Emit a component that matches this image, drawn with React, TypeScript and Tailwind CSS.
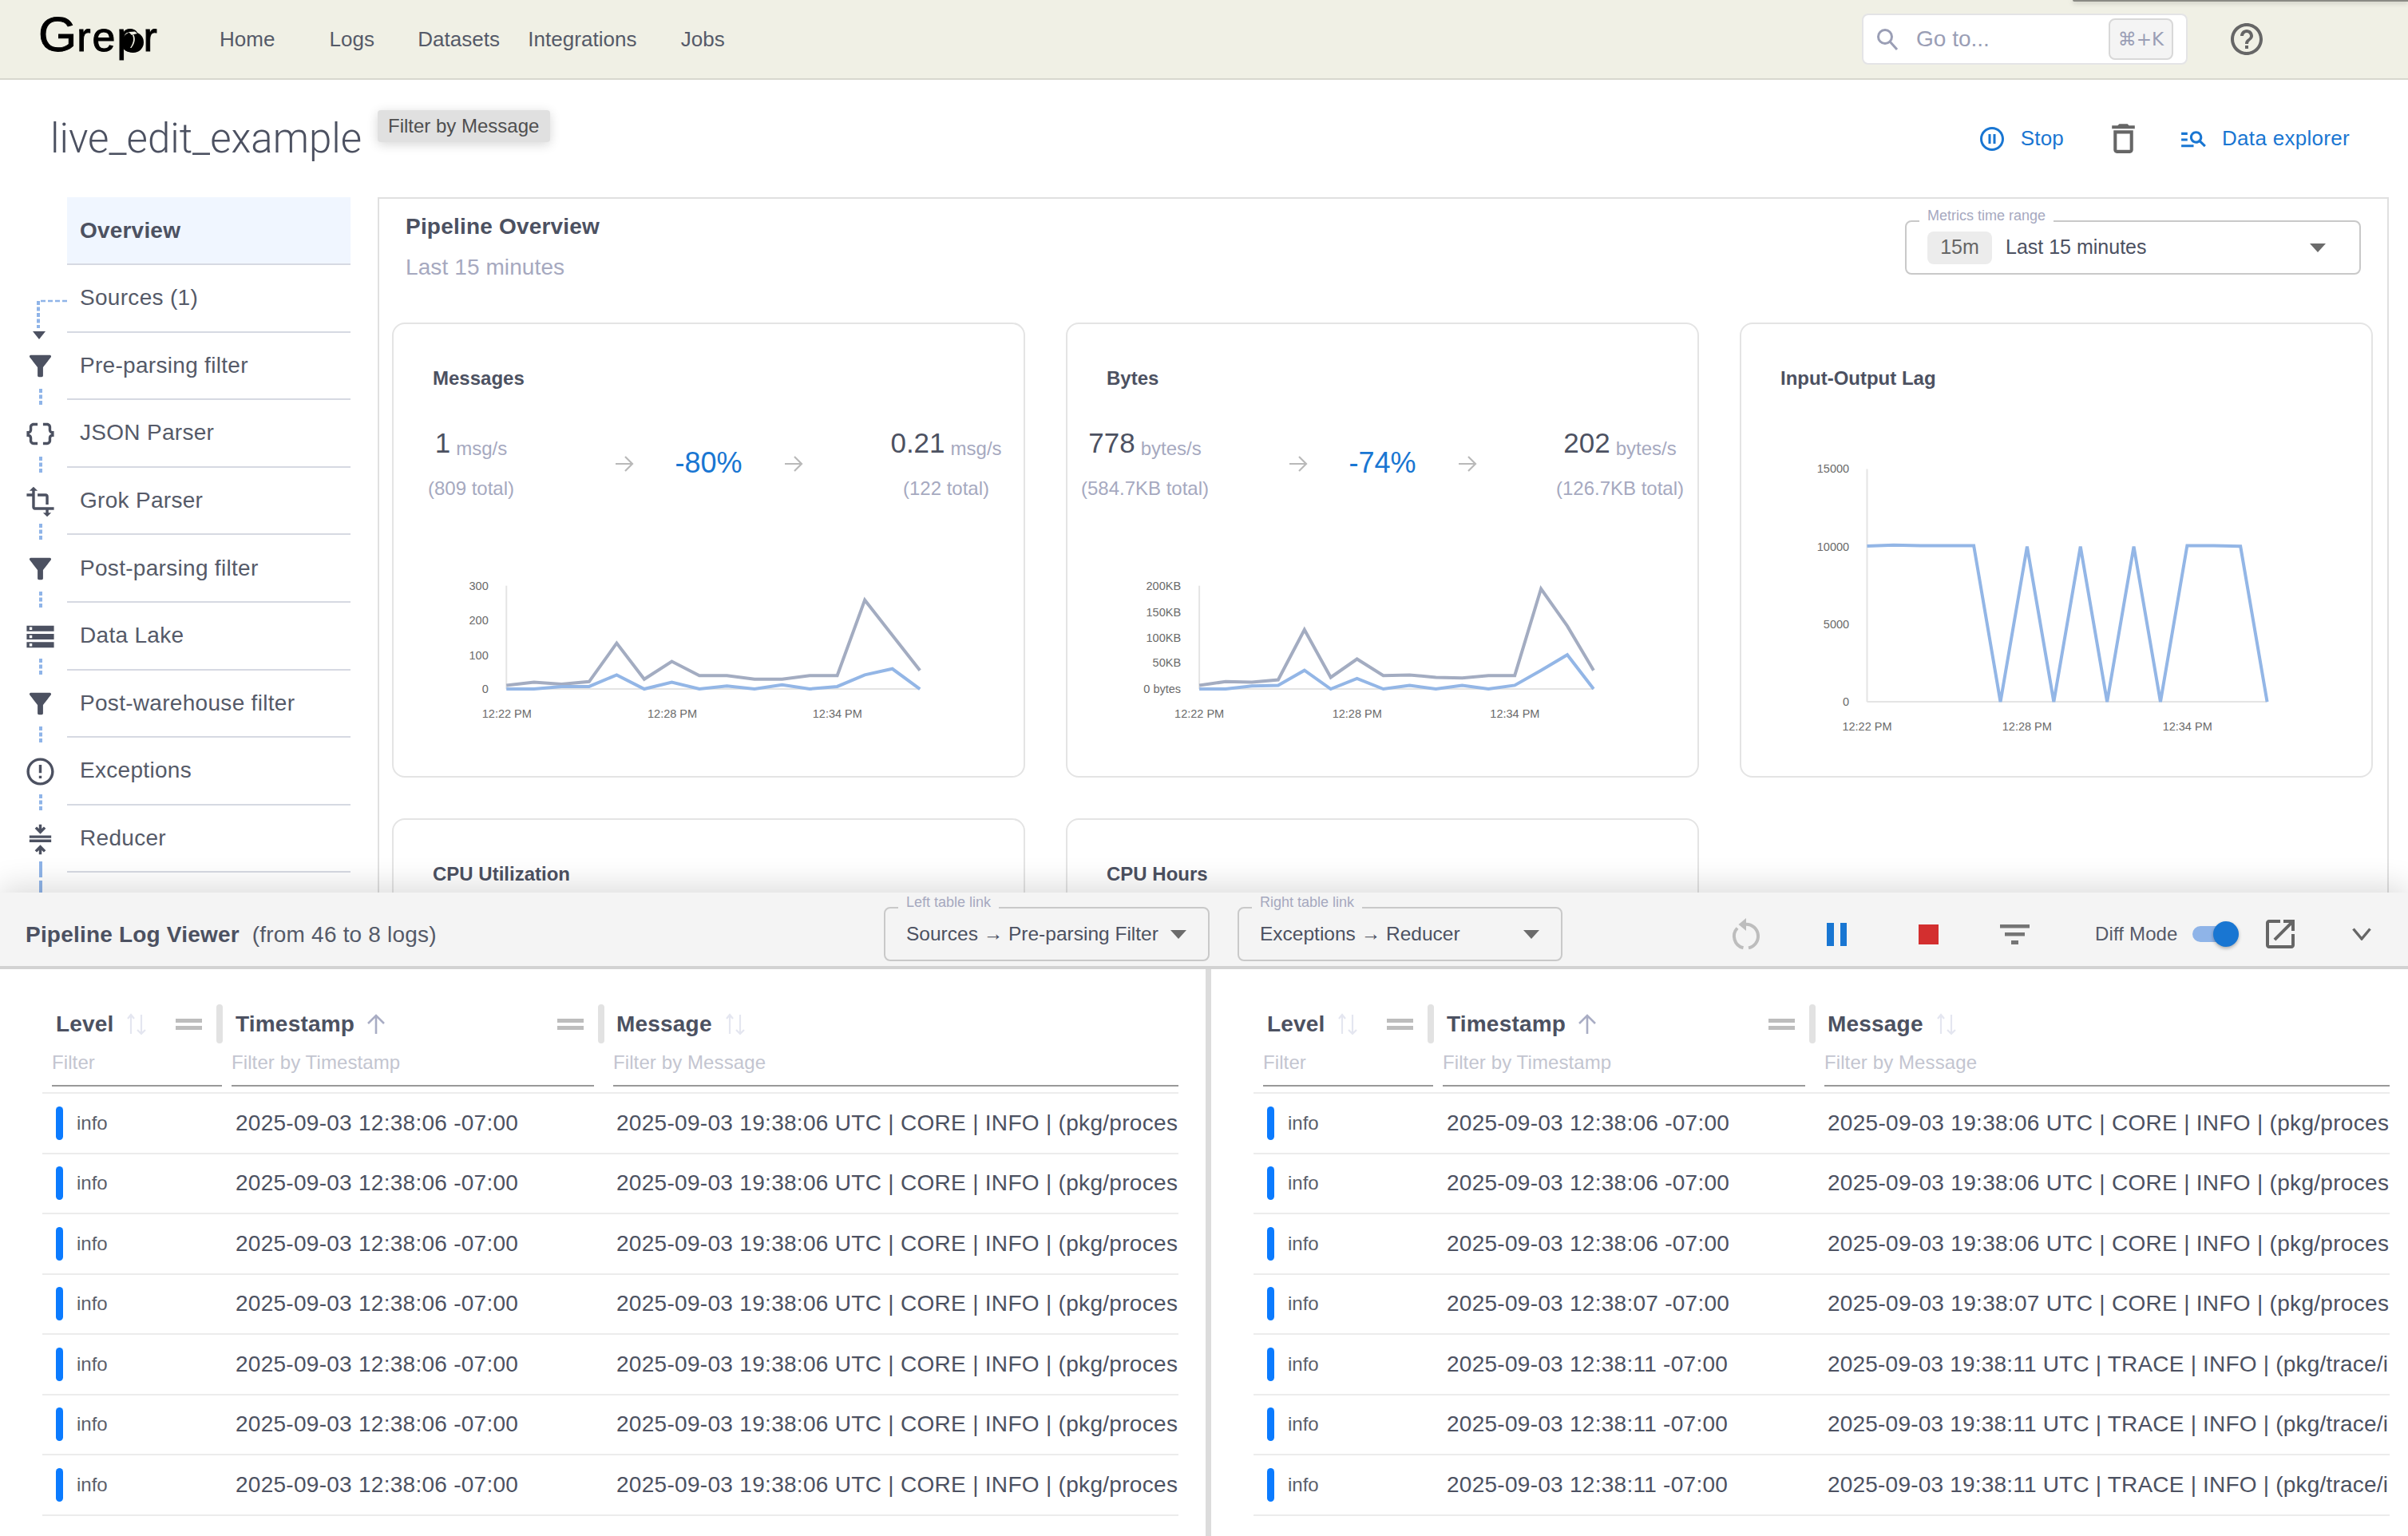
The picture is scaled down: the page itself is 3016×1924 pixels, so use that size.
import React from "react";

const INK = "text-[#4c5161]";

function MuiIcon({ d, size, className }: { d: string; size: number; className?: string }) {
  return (
    <svg width={size} height={size} viewBox="0 0 24 24" fill="currentColor" className={className}>
      <path d={d} />
    </svg>
  );
}

const ICONS = {
  filter: "M4.25 5.61C6.27 8.2 10 13 10 13v6c0 .55.45 1 1 1h2c.55 0 1-.45 1-1v-6s3.72-4.8 5.74-7.39c.51-.66.04-1.61-.79-1.61H5.04c-.83 0-1.3.95-.79 1.61z",
  json: "M4 7v2c0 .55-.45 1-1 1H2v4h1c.55 0 1 .45 1 1v2c0 1.65 1.35 3 3 3h3v-2H7c-.55 0-1-.45-1-1v-2c0-1.3-.84-2.42-2-2.83v-.34C5.16 11.42 6 10.3 6 9V7c0-.55.45-1 1-1h3V4H7C5.35 4 4 5.35 4 7zm17 3c-.55 0-1-.45-1-1V7c0-1.65-1.35-3-3-3h-3v2h3c.55 0 1 .45 1 1v2c0 1.3.84 2.42 2 2.83v.34c-1.16.41-2 1.52-2 2.83v2c0 .55-.45 1-1 1h-3v2h3c1.65 0 3-1.35 3-3v-2c0-.55.45-1 1-1h1v-4h-1z",
  transform: "M22 18v-2H8V4h2L7 1 4 4h2v2H2v2h4v8c0 1.1.9 2 2 2h8v2h-2l3 3 3-3h-2v-2h4zM10 8h6v6h2V8c0-1.1-.9-2-2-2h-6v2z",
  storage: "M2 20h20v-4H2v4zm2-3h2v2H4v-2zM2 4v4h20V4H2zm4 3H4V5h2v2zm-4 7h20v-4H2v4zm2-3h2v2H4v-2z",
  error: "M11 15h2v2h-2zm0-8h2v6h-2zm.99-5C6.47 2 2 6.48 2 12s4.47 10 9.99 10C17.52 22 22 17.52 22 12S17.52 2 11.99 2zM12 20c-4.42 0-8-3.58-8-8s3.58-8 8-8 8 3.58 8 8-3.58 8-8 8z",
  compress: "M4 9v2h16V9H4z M16 4l-1.41-1.41L13 4.17V1h-2v3.17L9.41 2.59 8 4l4 4 4-4z M8 20l1.41 1.41L11 19.83V23h2v-3.17l1.59 1.58L16 20l-4-4-4 4z M4 14h16v-2H4v2z",
  help: "M11 18h2v-2h-2v2zm1-16C6.48 2 2 6.48 2 12s4.48 10 10 10 10-4.48 10-10S17.52 2 12 2zm0 18c-4.41 0-8-3.59-8-8s3.59-8 8-8 8 3.59 8 8-3.59 8-8 8zm0-14c-2.21 0-4 1.79-4 4h2c0-1.1.9-2 2-2s2 .9 2 2c0 2-3 1.75-3 5h2c0-2.25 3-2.5 3-5 0-2.21-1.79-4-4-4z",
  pause: "M9 16h2V8H9v8zm3-14C6.48 2 2 6.48 2 12s4.48 10 10 10 10-4.48 10-10S17.52 2 12 2zm0 18c-4.41 0-8-3.59-8-8s3.59-8 8-8 8 3.59 8 8-3.59 8-8 8zm1-4h2V8h-2v8z",
  trash: "M6 19c0 1.1.9 2 2 2h8c1.1 0 2-.9 2-2V7H6v12zM8 9h8v10H8V9zm7.5-5l-1-1h-5l-1 1H5v2h14V4h-3.5z",
  explore: "M7 9H2V7h5v2zm0 3H2v2h5v-2zm13.59 7l-3.83-3.83c-.8.52-1.74.83-2.76.83-2.76 0-5-2.24-5-5s2.24-5 5-5 5 2.24 5 5c0 1.02-.31 1.96-.83 2.75L22 17.59 20.59 19zM17 11c0-1.65-1.35-3-3-3s-3 1.35-3 3 1.35 3 3 3 3-1.35 3-3zM2 19h10v-2H2v2z",
  open: "M19 19H5V5h7V3H5c-1.11 0-2 .9-2 2v14c0 1.1.89 2 2 2h14c1.1 0 2-.9 2-2v-7h-2v7zM14 3v2h3.59l-9.83 9.83 1.41 1.41L19 6.41V10h2V3h-7z",
};

function Caret({ className }: { className?: string }) {
  return (
    <svg width="20" height="11" viewBox="0 0 20 11" className={className}>
      <polygon points="0,0 20,0 10,11" fill="#6b6b6b" />
    </svg>
  );
}

function Outlined({
  legend,
  legendBg,
  className,
  children,
}: {
  legend: string;
  legendBg: string;
  className: string;
  children: React.ReactNode;
}) {
  return (
    <div className={`relative flex items-center rounded-[8px] border-2 border-[#c9c9c9] ${className}`}>
      <span className={`absolute left-[16px] top-[-19px] whitespace-nowrap px-[10px] text-[18px] leading-[22px] text-[#a6a9bf] ${legendBg}`}>
        {legend}
      </span>
      {children}
    </div>
  );
}

const SIDEBAR: { label: string; icon?: keyof typeof ICONS }[] = [
  { label: "Pre-parsing filter", icon: "filter" },
  { label: "JSON Parser", icon: "json" },
  { label: "Grok Parser", icon: "transform" },
  { label: "Post-parsing filter", icon: "filter" },
  { label: "Data Lake", icon: "storage" },
  { label: "Post-warehouse filter", icon: "filter" },
  { label: "Exceptions", icon: "error" },
  { label: "Reducer", icon: "compress" },
];

function Sidebar() {
  return (
    <div className="w-[473px] shrink-0">
      <div className="ml-[84px] mr-[34px] flex h-[85px] items-center border-b-2 border-[#d6d9e2] bg-[#f0f6ff] pl-[16px]">
        <span className={`text-[28px] font-bold tracking-[0.2px] ${INK}`}>Overview</span>
      </div>
      <div className="relative ml-[84px] mr-[34px] flex h-[84.6px] items-center border-b-2 border-[#d6d9e2] pl-[16px]">
        <svg width="46" height="52" viewBox="0 0 46 52" className="absolute left-[-43px] top-[43px] overflow-visible">
          <path d="M43 2H7" stroke="#8fb4e8" strokeWidth="2.5" strokeDasharray="6 3" fill="none" />
          <path d="M7 2V36" stroke="#8fb4e8" strokeWidth="4" strokeDasharray="5 2.5" fill="none" />
          <polygon points="0,40 16,40 8,50" fill="#4c5161" />
        </svg>
        <span className="text-[28px] tracking-[0.3px] text-[#555a68]">Sources (1)</span>
      </div>
      {SIDEBAR.map((r, i) => (
        <div key={i} className="flex h-[84.6px]">
          <div className="relative flex w-[84px] shrink-0 items-center pl-[30px] text-[#4c5161]">
            <MuiIcon d={ICONS[r.icon!]} size={41} />
            <svg
              width="4"
              height={r.icon === "compress" ? 40 : 20}
              className="absolute left-[49px] top-[70.5px] overflow-visible"
            >
              <line
                x1="2"
                y1="0"
                x2="2"
                y2={r.icon === "compress" ? 40 : 20}
                stroke="#8fb4e8"
                strokeWidth="4"
                strokeDasharray={r.icon === "compress" ? "20 4" : "5 2.5"}
              />
            </svg>
          </div>
          <div className="mr-[34px] flex flex-1 items-center border-b-2 border-[#d6d9e2] pl-[16px]">
            <span className="text-[28px] tracking-[0.3px] text-[#555a68]">{r.label}</span>
          </div>
        </div>
      ))}
    </div>
  );
}

type Chart = {
  h: number;
  gx: number;
  gy: number;
  sx: number;
  sy: number;
  axisX: number;
  axisTop: number;
  axisBottom: number;
  right: number;
  labelY: number;
  labelRight: number;
  xLabels: [string, number][];
  yLabels: [string, number][];
  xs: number[];
  series: { color: string; ys: number[] }[];
};

function ChartView({ c }: { c: Chart }) {
  const X = (v: number) => v / c.sx - c.gx;
  const Y = (v: number) => v / c.sy - c.gy;
  return (
    <svg width="789" height={c.h} viewBox={`0 0 789 ${c.h}`} className="block">
      <line x1={X(c.axisX)} x2={X(c.axisX)} y1={Y(c.axisTop)} y2={Y(c.axisBottom)} stroke="#e4e4e4" strokeWidth="2" />
      <line x1={X(c.axisX)} x2={X(c.right)} y1={Y(c.axisBottom)} y2={Y(c.axisBottom)} stroke="#e4e4e4" strokeWidth="2" />
      {c.yLabels.map(([t, y]) => (
        <text key={t} x={X(c.labelRight)} y={Y(y) + 5} textAnchor="end" fontSize="14.5" fill="#6a6a6a">
          {t}
        </text>
      ))}
      {c.xLabels.map(([t, x]) => (
        <text key={t} x={X(x)} y={Y(c.labelY) + 5} textAnchor="middle" fontSize="14.5" fill="#6a6a6a">
          {t}
        </text>
      ))}
      {c.series.map((s, i) => (
        <polyline
          key={i}
          fill="none"
          stroke={s.color}
          strokeWidth="4"
          strokeLinejoin="miter"
          points={s.ys.map((y, j) => `${X(c.xs[j])},${Y(y)}`).join(" ")}
        />
      ))}
    </svg>
  );
}

const GRAY = "#a3acc1";
const BLUE = "#93b6e6";
const steps = (a: number, b: number) => Array.from({ length: 16 }, (_, i) => a + ((b - a) * i) / 15);

const CHART1: Chart = {
  h: 190,
  gx: 13,
  gy: 330,
  sx: 1.867,
  sy: 2.613,
  axisX: 288,
  axisTop: 898,
  axisBottom: 1236,
  right: 1255,
  labelY: 1317,
  labelRight: 246,
  xLabels: [
    ["12:22 PM", 289],
    ["12:28 PM", 676],
    ["12:34 PM", 1062],
  ],
  yLabels: [
    ["300", 900],
    ["200", 1012],
    ["100", 1125],
    ["0", 1237],
  ],
  xs: steps(288, 1255),
  series: [
    { color: GRAY, ys: [1224, 1214, 1220, 1212, 1086, 1204, 1146, 1192, 1192, 1204, 1204, 1192, 1192, 945, 1060, 1175] },
    { color: BLUE, ys: [1236, 1236, 1228, 1228, 1190, 1236, 1214, 1236, 1226, 1236, 1222, 1236, 1228, 1190, 1170, 1236] },
  ],
};

const CHART2: Chart = {
  h: 190,
  gx: 17,
  gy: 330,
  sx: 1.867,
  sy: 2.613,
  axisX: 340,
  axisTop: 898,
  axisBottom: 1236,
  right: 1262,
  labelY: 1317,
  labelRight: 297,
  xLabels: [
    ["12:22 PM", 340],
    ["12:28 PM", 709],
    ["12:34 PM", 1078],
  ],
  yLabels: [
    ["200KB", 900],
    ["150KB", 985],
    ["100KB", 1068],
    ["50KB", 1151],
    ["0 bytes", 1237],
  ],
  xs: steps(340, 1262),
  series: [
    { color: GRAY, ys: [1224, 1212, 1214, 1206, 1042, 1198, 1138, 1192, 1190, 1198, 1200, 1192, 1192, 908, 1030, 1175] },
    { color: BLUE, ys: [1236, 1236, 1226, 1224, 1175, 1236, 1202, 1236, 1224, 1236, 1224, 1236, 1224, 1175, 1124, 1236] },
  ],
};

const CHART3: Chart = {
  h: 360,
  gx: 21,
  gy: 180,
  sx: 1.832,
  sy: 2.613,
  axisX: 327,
  axisTop: 516,
  axisBottom: 1278,
  right: 1245,
  labelY: 1360,
  labelRight: 286,
  xLabels: [
    ["12:22 PM", 327],
    ["12:28 PM", 694],
    ["12:34 PM", 1062],
  ],
  yLabels: [
    ["15000", 516],
    ["10000", 772],
    ["5000", 1025],
    ["0", 1278],
  ],
  xs: steps(327, 1245),
  series: [{ color: BLUE, ys: [768, 765, 767, 767, 767, 1278, 770, 1278, 770, 1278, 770, 1278, 767, 767, 769, 1278] }],
};

function Arrow() {
  return (
    <svg width="24" height="22" viewBox="0 0 24 22" fill="none" stroke="#b9b9b9" strokeWidth="2.2">
      <path d="M1 11H22M13 2L22 11L13 20" />
    </svg>
  );
}

function Stat({ v, unit, total }: { v: string; unit: string; total: string }) {
  return (
    <div className="flex flex-col items-center whitespace-nowrap">
      <div className="flex h-[40px] items-baseline">
        <span className={`text-[35px] leading-[40px] ${INK}`}>{v}</span>
        <span className="ml-[7px] translate-y-[3px] text-[24px] leading-[40px] text-[#a6a9bf]">{unit}</span>
      </div>
      <div className="mt-[22px] text-[24px] leading-[30px] text-[#a6a9bf]">{total}</div>
    </div>
  );
}

function Card({ title, children }: { title: string; children?: React.ReactNode }) {
  return (
    <div className="h-[570px] rounded-[16px] border-2 border-[#e4e4e4] bg-white">
      <div className={`pl-[49px] pt-[52px] text-[24px] font-bold leading-[32px] ${INK}`}>{title}</div>
      {children}
    </div>
  );
}

function Stats(p: { a: string; au: string; at: string; pct: string; b: string; bu: string; bt: string }) {
  return (
    <div className="mt-[45px] grid grid-cols-[194px_1fr_194px] items-center">
      <Stat v={p.a} unit={p.au} total={p.at} />
      <div className="flex items-center justify-center">
        <Arrow />
        <span className="-mt-[3px] w-[188px] text-center text-[36px] text-[#1976d2]">{p.pct}</span>
        <Arrow />
      </div>
      <Stat v={p.b} unit={p.bu} total={p.bt} />
    </div>
  );
}

function SortBoth() {
  return (
    <svg width="24" height="28" viewBox="0 0 24 28" fill="none" stroke="#e4e6f0" strokeWidth="2.2">
      <path d="M5 26V2M1 7L5 2L9 7" />
      <path d="M18 2V26M13 21L18 26L23 21" />
    </svg>
  );
}

function SortUp() {
  return (
    <svg width="24" height="25" viewBox="0 0 24 25" fill="none" stroke="#a9adc4" strokeWidth="2.6">
      <path d="M12 25V2M2 12L12 2L22 12" />
    </svg>
  );
}

function Handle() {
  return (
    <div className="flex w-[33px] flex-col gap-[4px]">
      <div className="h-[5px] bg-[#bdbdbd]" />
      <div className="h-[5px] bg-[#bdbdbd]" />
    </div>
  );
}

function Sep() {
  return <div className="h-[49px] w-[8px] rounded-full bg-[#e2e2e2]" />;
}

const COLS = "grid grid-cols-[227px_478px_718px]";

type Row = { ts: string; msg: string; track: string };

function LogTable({ rows, width }: { rows: Row[]; width: string }) {
  const head = `text-[28px] font-bold leading-[34px] tracking-[0.2px] ${INK}`;
  const filter = "border-b-2 border-[#999999] pb-[13px] text-[24px] leading-[30px] tracking-[0.1px] text-[#c3c5d0]";
  return (
    <div className={`shrink-0 overflow-hidden pl-[53px] pt-[44px] ${width}`}>
      <div className={`${COLS} h-[49px]`}>
        <div className="flex items-center pl-[17px] pr-[2px]">
          <span className={head}>Level</span>
          <span className="ml-[16px]"><SortBoth /></span>
          <span className="ml-[37px]"><Handle /></span>
          <span className="ml-[18px]"><Sep /></span>
        </div>
        <div className="flex items-center pl-[15px] pr-[1px]">
          <span className={head}>Timestamp</span>
          <span className="ml-[15px]"><SortUp /></span>
          <span className="ml-auto"><Handle /></span>
          <span className="ml-[18px]"><Sep /></span>
        </div>
        <div className="flex items-center pl-[14px]">
          <span className={head}>Message</span>
          <span className="ml-[17px]"><SortBoth /></span>
        </div>
      </div>
      <div className={`${COLS} h-[54px] items-end`}>
        <div className={`ml-[12px] mr-[2px] ${filter}`}>Filter</div>
        <div className={`ml-[10px] mr-[14px] ${filter}`}>Filter by Timestamp</div>
        <div className={`ml-[10px] ${filter}`}>Filter by Message</div>
      </div>
      <div className="mt-[7px] w-[1423px] border-t-2 border-[#ececec]">
        {rows.map((r, i) => (
          <div key={i} className={`${COLS} h-[75.5px] items-center border-b-2 border-[#ececec]`}>
            <div className="flex items-center pl-[17px]">
              <div className="h-[42px] w-[9px] rounded-full bg-[#0b7bff]" />
              <span className="ml-[17px] text-[24px] text-[#5b5f6a]">info</span>
            </div>
            <div className={`pl-[15px] text-[28px] tracking-[0.27px] ${INK}`}>{r.ts}</div>
            <div className={`overflow-hidden whitespace-nowrap pl-[14px] text-[28px] ${r.track} ${INK}`}>{r.msg}</div>
          </div>
        ))}
      </div>
    </div>
  );
}

const CORE_TRACK = "tracking-[0.3px]";
const TRACE_TRACK = "tracking-[0.2px]";
const core = (s: string) => `2025-09-03 19:38:${s} UTC | CORE | INFO | (pkg/proces`;
const trace = (s: string) => `2025-09-03 19:38:${s} UTC | TRACE | INFO | (pkg/trace/i`;
const LEFT: Row[] = Array.from({ length: 7 }, () => ({ ts: "2025-09-03 12:38:06 -07:00", msg: core("06"), track: CORE_TRACK }));
const RIGHT: Row[] = [
  { ts: "2025-09-03 12:38:06 -07:00", msg: core("06"), track: CORE_TRACK },
  { ts: "2025-09-03 12:38:06 -07:00", msg: core("06"), track: CORE_TRACK },
  { ts: "2025-09-03 12:38:06 -07:00", msg: core("06"), track: CORE_TRACK },
  { ts: "2025-09-03 12:38:07 -07:00", msg: core("07"), track: CORE_TRACK },
  { ts: "2025-09-03 12:38:11 -07:00", msg: trace("11"), track: TRACE_TRACK },
  { ts: "2025-09-03 12:38:11 -07:00", msg: trace("11"), track: TRACE_TRACK },
  { ts: "2025-09-03 12:38:11 -07:00", msg: trace("11"), track: TRACE_TRACK },
];

const NAV: [string, string][] = [
  ["Home", "ml-[79px]"],
  ["Logs", "ml-[68px]"],
  ["Datasets", "ml-[54px]"],
  ["Integrations", "ml-[35px]"],
  ["Jobs", "ml-[55px]"],
];

export default function App() {
  return (
    <div className="relative flex h-[1924px] w-[3016px] flex-col overflow-hidden bg-white font-['Liberation_Sans',Arial,sans-serif]">
      <div className="absolute right-0 top-0 h-[2px] w-[420px] rounded-bl-[4px] bg-[#8a8a84] shadow-[0_1px_6px_rgba(0,0,0,0.35)]" />

      {/* Top bar */}
      <header className="flex h-[100px] shrink-0 items-center border-b-2 border-[#d8d8ce] bg-[#f0f0e5]">
        <div className="relative ml-[48px] h-[70px] w-[148px] shrink-0">
          <span className="absolute left-0 top-[-6px] whitespace-nowrap text-[62px] leading-[70px] text-black [-webkit-text-stroke:1px_black]">
            G<span className="text-[52px]">r</span>
            <span className="ml-[2px] text-[52px]">e</span>
            <span className="ml-[2px] text-[52px]">p</span>
            <span className="ml-[4px] text-[52px]">r</span>
          </span>
          <div className="absolute left-[105px] top-[26px] h-[26px] w-[27px] rounded-full bg-black" />
          <svg width="14" height="22" viewBox="0 0 14 22" className="absolute left-[112px] top-[25px]" fill="#f0f0e5">
            <path d="M1 1 L9 0.5 L12 3 L8 4 L5 5 Z" />
            <path d="M6 5 C8 10 7 15 3 21 L4.5 21 C9 15 10 10 7.5 4.5 Z" />
          </svg>
        </div>
        {NAV.map(([t, m]) => (
          <span key={t} className={`${m} text-[26px] tracking-[0.05px] text-[#555a68]`}>
            {t}
          </span>
        ))}
        <div className="ml-auto mr-[50px] flex h-[64px] w-[408px] items-center rounded-[8px] border-2 border-[#e4e4e6] bg-white">
          <svg width="30" height="28" viewBox="0 0 30 28" fill="none" stroke="#9a9eb5" strokeWidth="3" className="ml-[15px]">
            <circle cx="12" cy="11" r="8.5" />
            <path d="M18 17L27 27" />
          </svg>
          <span className="ml-[21px] text-[28px] text-[#9a9eb5]">Go to...</span>
          <div className="ml-auto mr-[16px] flex h-[52px] w-[81px] items-center justify-center rounded-[8px] border-2 border-[#d8d8d8] bg-[#f4f4f4] font-['DejaVu_Sans',sans-serif] text-[23px] text-[#9a9eb5]">
            ⌘+K
          </div>
        </div>
        <MuiIcon d={ICONS.help} size={48} className="mr-[178px] text-[#666666]" />
      </header>

      <div className="relative z-0 min-h-0 flex-1 overflow-hidden">
        {/* Title row */}
        <div className="relative flex h-[147px] items-center pl-[63px]">
          <h1 className="mt-[2px] font-['Roboto',sans-serif] text-[51px] font-light text-[#4c5161]">live_edit_example</h1>
          <div className="absolute left-[473px] top-[38px] flex h-[40px] w-[216px] items-center rounded-[4px] bg-[#e0e0e0] pl-[13px] text-[24px] text-[#4f4f4f] shadow-[0_3px_14px_rgba(0,0,0,0.16)]">
            Filter by Message
          </div>
          <div className="ml-auto mr-[73px] flex items-center">
            <MuiIcon d={ICONS.pause} size={36} className="text-[#1976d2]" />
            <span className="ml-[18px] text-[26px] tracking-[0.2px] text-[#1976d2]">Stop</span>
            <MuiIcon d={ICONS.trash} size={49} className="ml-[50px] text-[#666666]" />
            <MuiIcon d={ICONS.explore} size={37} className="ml-[45px] text-[#1976d2]" />
            <span className="ml-[17px] text-[26px] tracking-[0.3px] text-[#1976d2]">Data explorer</span>
          </div>
        </div>

        <div className="flex">
          <Sidebar />
          <main className="mr-[24px] flex-1 border-l-2 border-r-2 border-t-2 border-[#e0e0e0]">
            <div className="flex h-[155px] justify-between">
              <div className="pl-[33px] pt-[19px]">
                <div className={`text-[28px] font-bold leading-[32px] tracking-[0.2px] ${INK}`}>Pipeline Overview</div>
                <div className="mt-[19px] text-[28px] leading-[32px] tracking-[0.1px] text-[#a6a9bf]">Last 15 minutes</div>
              </div>
              <Outlined legend="Metrics time range" legendBg="bg-white" className="mr-[33px] mt-[27px] h-[68px] w-[571px] pl-[26px]">
                <span className="flex h-[41px] w-[81px] items-center justify-center rounded-[8px] bg-[#ececec] text-[25px] text-[#666666]">
                  15m
                </span>
                <span className={`ml-[17px] text-[25px] ${INK}`}>Last 15 minutes</span>
                <Caret className="ml-auto mr-[42px]" />
              </Outlined>
            </div>
            <div className="grid grid-cols-[793px_793px_793px] gap-[51px] pl-[16px]">
              <Card title="Messages">
                <Stats a="1" au="msg/s" at="(809 total)" pct="-80%" b="0.21" bu="msg/s" bt="(122 total)" />
                <div className="mt-[93px]"><ChartView c={CHART1} /></div>
              </Card>
              <Card title="Bytes">
                <Stats a="778" au="bytes/s" at="(584.7KB total)" pct="-74%" b="202" bu="bytes/s" bt="(126.7KB total)" />
                <div className="mt-[93px]"><ChartView c={CHART2} /></div>
              </Card>
              <Card title="Input-Output Lag">
                <div className="mt-[80px]"><ChartView c={CHART3} /></div>
              </Card>
              <Card title="CPU Utilization" />
              <Card title="CPU Hours" />
            </div>
          </main>
        </div>
      </div>

      {/* Log viewer */}
      <section className="relative z-10 h-[806px] shrink-0 bg-white shadow-[0_-8px_36px_rgba(0,0,0,0.14)]">
        <div className="flex h-[96px] items-center border-b-4 border-[#d2d2d2] bg-[#f4f4f4] pt-[12px]">
          <div className="mt-[2px] w-[1107px] shrink-0 whitespace-nowrap pl-[32px] text-[28px] tracking-[0.2px] text-[#555a68]">
            <span className={`font-bold ${INK}`}>Pipeline Log Viewer</span>
            <span className="ml-[16px]">(from 46 to 8 logs)</span>
          </div>
          <Outlined legend="Left table link" legendBg="bg-[#f4f4f4]" className="h-[68px] w-[408px] pl-[26px]">
            <span className={`whitespace-nowrap text-[24.5px] ${INK}`}>Sources → Pre-parsing Filter</span>
            <Caret className="ml-auto mr-[27px]" />
          </Outlined>
          <Outlined legend="Right table link" legendBg="bg-[#f4f4f4]" className="ml-[35px] h-[68px] w-[407px] pl-[26px]">
            <span className={`whitespace-nowrap text-[24.5px] ${INK}`}>Exceptions → Reducer</span>
            <Caret className="ml-auto mr-[27px]" />
          </Outlined>

          <svg width="40" height="40" viewBox="0 0 40 40" fill="none" className="ml-[210px]">
            <path d="M20 7.7A15 15 0 0 1 23 37.4M16.5 37.3A15 15 0 0 1 9 12.5" stroke="#bdbdbd" strokeWidth="4" />
            <polygon points="20,0 20,16 10.5,8" fill="#bdbdbd" />
          </svg>
          <svg width="25" height="29" viewBox="0 0 25 29" className="ml-[81px]">
            <rect x="0" y="0" width="9" height="29" fill="#1976d2" />
            <rect x="17" y="0" width="8" height="29" fill="#1976d2" />
          </svg>
          <div className="ml-[90px] h-[25px] w-[25px] bg-[#d32f2f]" />
          <svg width="37" height="25" viewBox="0 0 37 25" className="ml-[77px]">
            <rect x="0" y="0" width="37" height="4.5" fill="#757575" />
            <rect x="6" y="10" width="25" height="4.5" fill="#757575" />
            <rect x="14" y="20" width="9" height="5" fill="#757575" />
          </svg>
          <span className="ml-[82px] text-[24px] tracking-[0.15px] text-[#555a68]">Diff Mode</span>
          <div className="relative ml-[18px] h-[20px] w-[51px] rounded-full bg-[#8fb4e8]">
            <div className="absolute left-[26px] top-[-6px] h-[32px] w-[32px] rounded-full bg-[#1976d2] shadow-[0_2px_4px_rgba(0,0,0,0.3)]" />
          </div>
          <MuiIcon d={ICONS.open} size={48} className="ml-[35px] text-[#666666]" />
          <svg width="24" height="16" viewBox="0 0 24 16" fill="none" stroke="#666666" strokeWidth="3.4" className="ml-[66px]">
            <path d="M1.5 1.5L12 14L22.5 1.5" />
          </svg>
        </div>
        <div className="flex">
          <LogTable rows={LEFT} width="w-[1510px]" />
          <div className="h-[710px] w-[7px] shrink-0 bg-[#dcdcdc]" />
          <LogTable rows={RIGHT} width="w-[1499px]" />
        </div>
      </section>
    </div>
  );
}
